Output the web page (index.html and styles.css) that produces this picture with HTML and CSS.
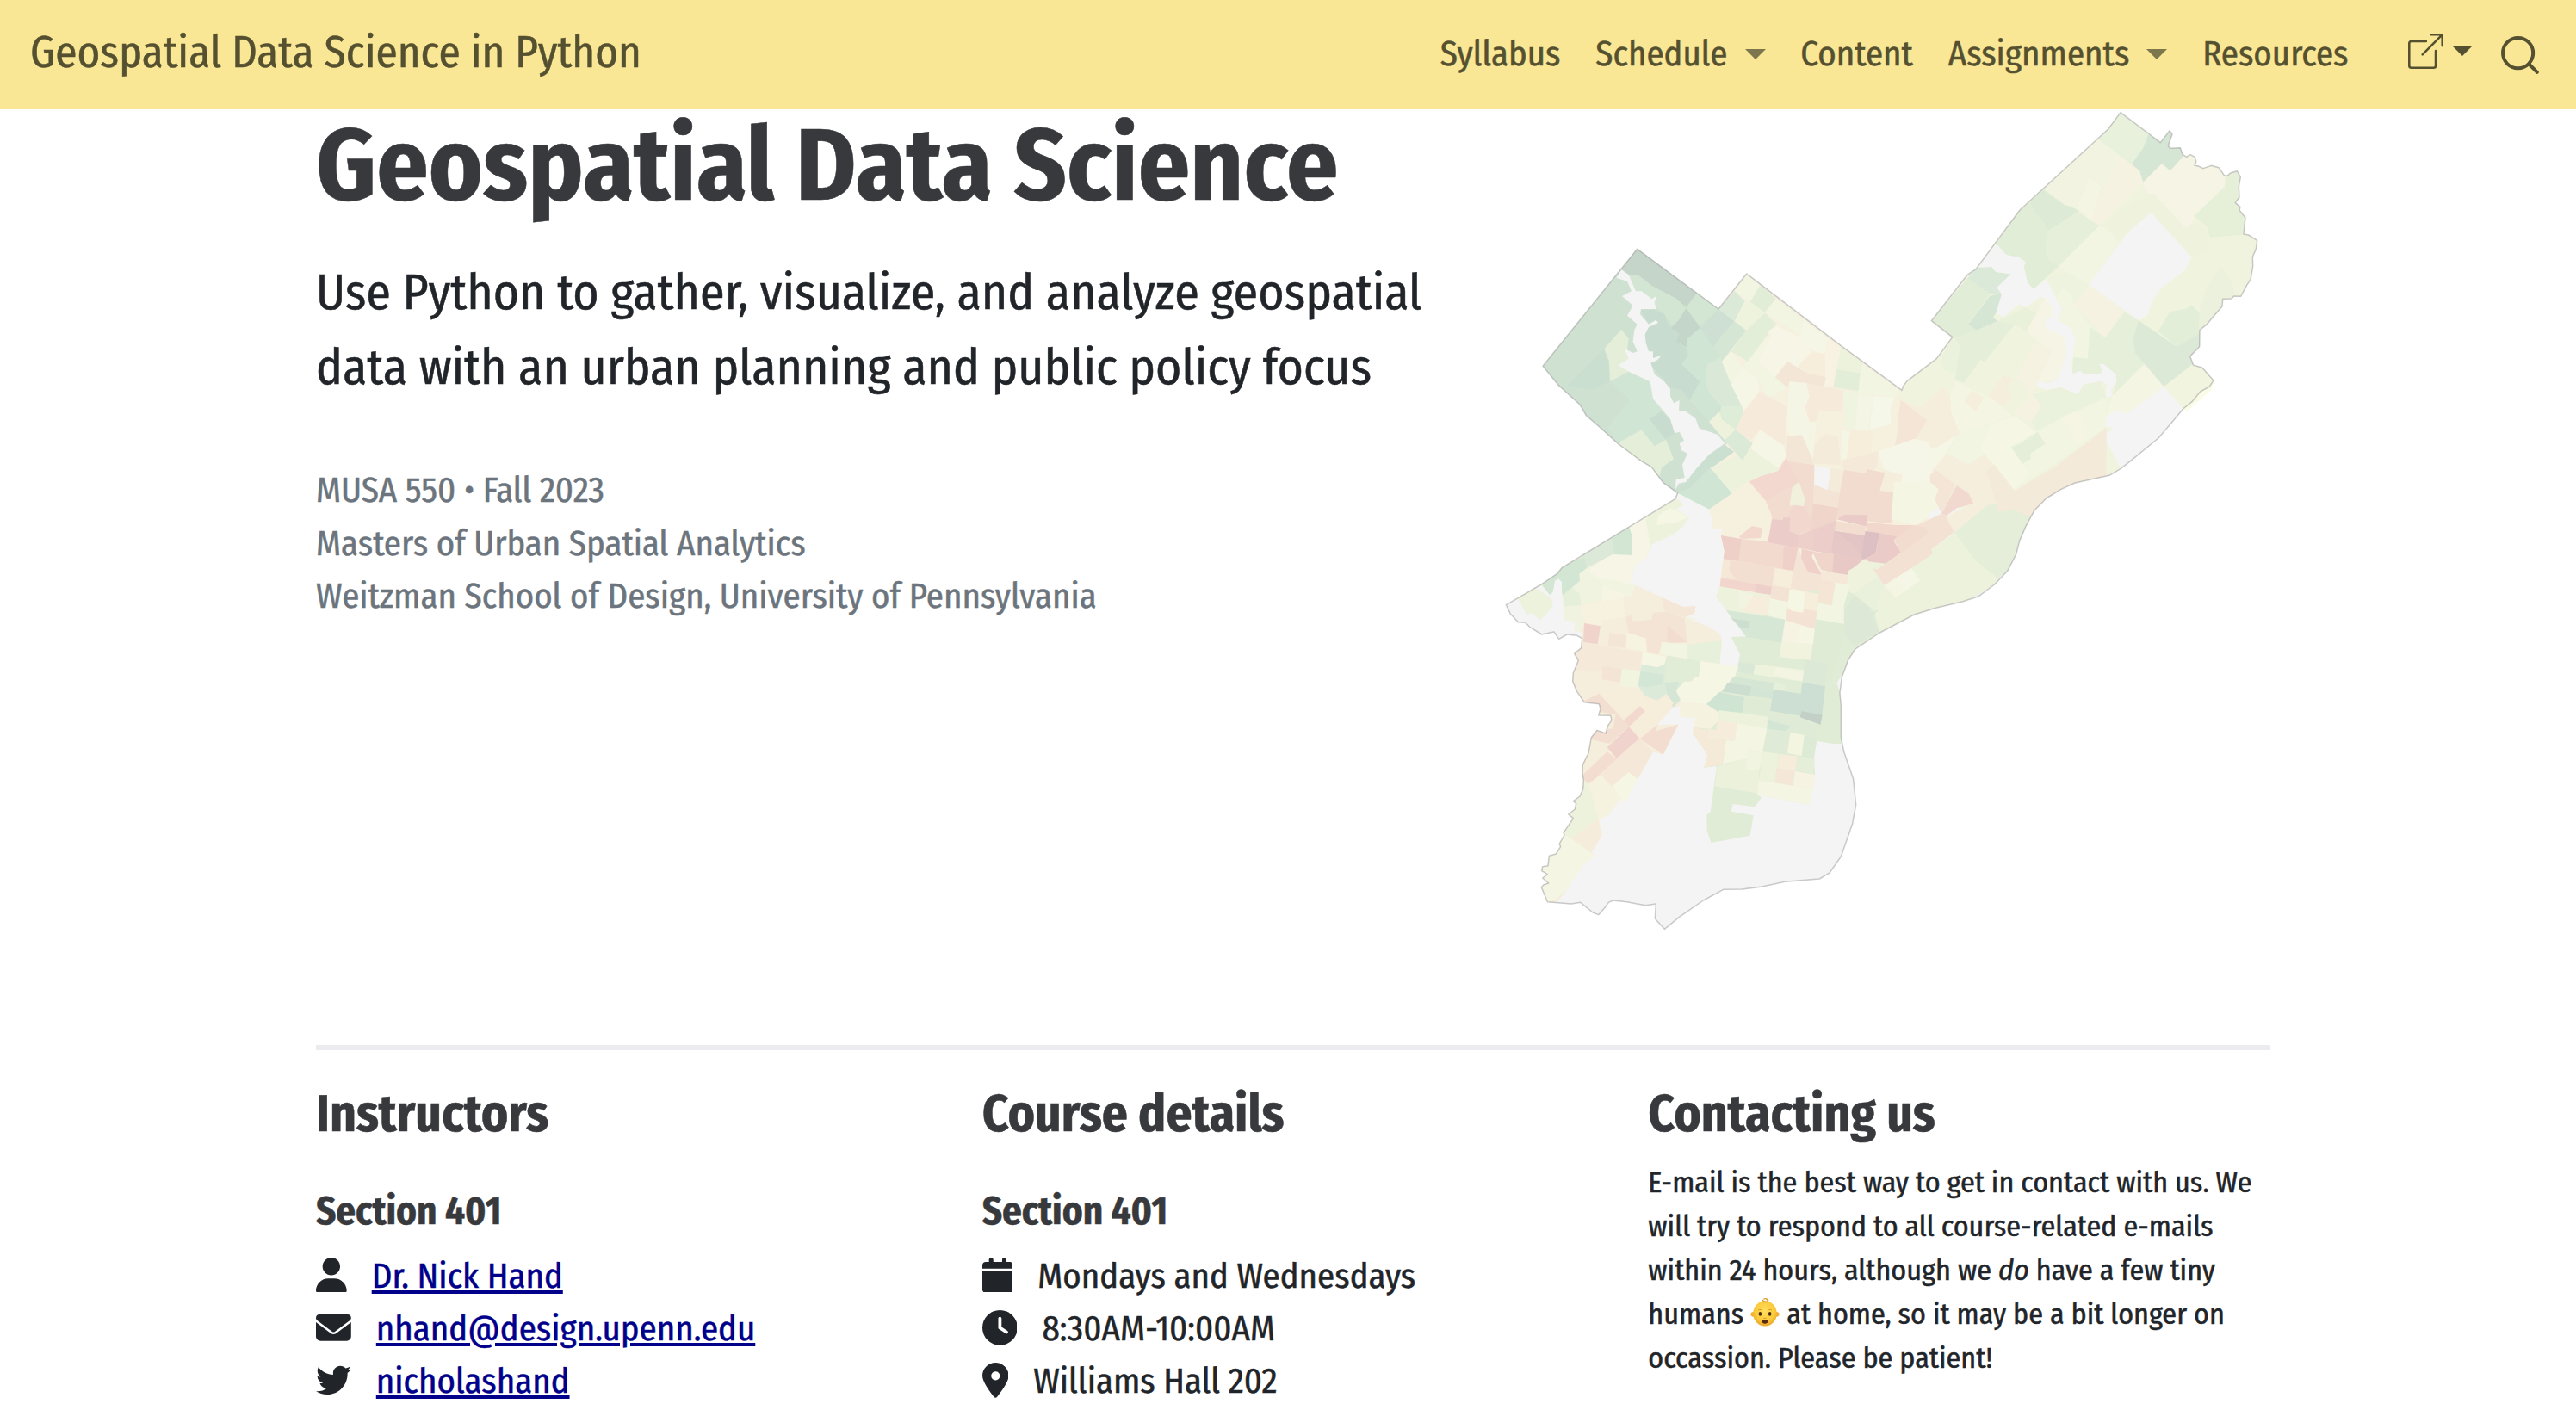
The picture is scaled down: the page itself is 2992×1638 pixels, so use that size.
FILE: index.html
```
<!DOCTYPE html>
<html lang="en">
<head>
<meta charset="utf-8">
<title>Geospatial Data Science in Python</title>
<link rel="stylesheet" href="styles.css">
</head>
<body>
<header class="navbar">
  <a class="brand" href="#">Geospatial Data Science in Python</a>
  <nav class="menu">
    <a href="#">Syllabus</a>
    <a href="#">Schedule<i class="caret"></i></a>
    <a href="#">Content</a>
    <a href="#">Assignments<i class="caret"></i></a>
    <a href="#">Resources</a>
  </nav>
  <div class="tools">
    <svg class="external" viewBox="0 0 16 16" fill="currentColor"><path fill-rule="evenodd" d="M8.636 3.5a.5.5 0 0 0-.5-.5H1.5A1.5 1.5 0 0 0 0 4.5v10A1.5 1.5 0 0 0 1.500 16h10a1.500 1.500 0 0 0 1.500-1.500V7.864a.5.5 0 0 0-1 0V14.500a.5.5 0 0 1-.5.5h-10a.5.5 0 0 1-.5-.5v-10a.5.5 0 0 1 .5-.5h6.636a.5.5 0 0 0 .5-.5z"/><path fill-rule="evenodd" d="M16 .5a.5.5 0 0 0-.5-.5h-5a.5.5 0 0 0 0 1h3.793L6.146 9.146a.5.5 0 1 0 .708.708L15 1.707V5.500a.5.5 0 0 0 1 0v-5z"/></svg>
    <i class="caret solid"></i>
    <svg class="search" viewBox="0 0 44 44" fill="none" stroke="currentColor" stroke-width="4" stroke-linecap="round"><circle cx="19.600" cy="19.600" r="17.600"/><path d="M32.500 32.500l9.300 9.300"/></svg>
  </div>
</header>
<main class="page">
  <section class="hero">
    <div class="intro">
      <h1>Geospatial Data Science</h1>
      <p class="subtitle">Use Python to gather, visualize, and analyze geospatial data with an urban planning and public policy focus</p>
      <p class="meta">MUSA 550 • Fall 2023<br>Masters of Urban Spatial Analytics<br>Weitzman School of Design, University of Pennsylvania</p>
    </div>
    <svg class="map" viewBox="0 51 2691 2919">
      <defs>
        <path id="city" d="M156,946 485,538 768,747 866,624 1195,875 1407,1030 1412,1015 1425,998 1528,920 1583,845 1510,788 1634,629 1665,608 1818,402 2126,120 2169,62 2308,167 2340,125 2349,137 2335,178 2342,187 2377,185 2385,208 2399,217 2412,209 2428,217 2432,234 2427,247 2440,249 2457,257 2485,247 2511,254 2530,281 2542,282 2552,273 2575,266 2587,287 2581,320 2583,357 2569,377 2586,391 2583,403 2604,428 2598,486 2615,489 2645,508 2641,538 2629,565 2630,598 2622,645 2610,662 2588,703 2564,702 2556,711 2525,712 2523,738 2491,775 2470,800 2445,820 2444,878 2411,912 2423,943 2453,951 2493,996 2479,1017 2447,1035 2418,1070 2388,1094 2301,1197 2204,1276 2170,1303 2130,1327 2010,1353 1960,1376 1910,1407 1868,1450 1840,1502 1817,1555 1805,1602 1775,1660 1730,1707 1675,1748 1620,1766 1525,1789 1450,1812 1330,1875 1245,1932 1220,1970 1198,2030 1191,2085 1195,2130 1195,2240 1205,2290 1238,2385 1247,2475 1235,2540 1195,2655 1155,2712 1120,2733 1000,2743 920,2760 850,2769 785,2770 715,2808 630,2867 580,2908 547,2872 550,2820 515,2825 480,2819 450,2813 400,2808 385,2815 375,2830 350,2858 330,2850 287,2815 255,2820 172,2813 151,2762 158,2754 176,2748 155,2730 172,2717 152,2705 155,2690 174,2687 178,2653 202,2646 218,2620 213,2612 231,2580 228,2572 262,2522 245,2508 268,2490 272,2470 262,2462 285,2445 296,2420 298,2390 294,2365 295,2335 315,2295 325,2240 345,2215 375,2226 382,2200 396,2180 392,2164 350,2163 357,2140 352,2123 300,2117 275,2080 260,2045 262,2015 280,1972 266,1948 290,1928 293,1895 275,1885 240,1881 212,1897 195,1872 152,1881 110,1855 95,1840 70,1838 42,1808 28,1778 150,1707 205,1670 222,1649 455,1507 617,1409 626,1388 575,1352 535,1298 498,1276 420,1218 350,1155 307,1118 285,1080 210,1012Z"/>
        <clipPath id="land"><use href="#city"/></clipPath>
      </defs>
      <path fill="#fbfce6" d="M2388,1094 2420,1068 2450,1036 2480,1018 2495,1000 2485,1030 2400,1104Z"/>
      <use href="#city" fill="#f4f4f4"/>
      <g clip-path="url(#land)">
        <!-- Northeast -->
        <g transform="translate(1320 0)">
          <path fill="#f0f4df" d="M88,1030 0,960 190,788 498,402 849,50 1030,100 1330,200 1340,700 1170,1010 860,1300 500,1500 150,1400 0,1300Z"/>
          <path fill="#e8f1db" d="M772,155 849,62 945,140 928,185 887,243Z"/>
          <path fill="#f6f4e4" d="M927,305 993,240 1022,265 1080,190 1215,240 1212,320 1078,468 965,345 943,345Z"/>
          <path fill="#d5e6d4" d="M945,140 988,160 1020,120 1065,185 1070,212 1022,265 993,240 927,305 915,265 887,243 928,185Z"/>
          <path fill="#f6f2e1" d="M843,215 887,243 915,265 927,305 775,455 740,435Z"/>
          <path fill="#f2f4e1" d="M582,330 772,155 843,215 790,310 740,290 700,395 655,385Z"/>
          <path fill="#f5f5e4" d="M740,290 782,320 745,440 697,395Z"/>
          <path fill="#e6f0d9" d="M1215,280 1280,250 1290,300 1300,440 1278,488 1160,497 1150,460 1105,423 1212,320Z"/>
          <path fill="#dcead6" d="M533,375 580,330 655,385 675,390 705,405 592,478 585,450 550,410Z"/>
          <path fill="#e1edd6" d="M415,518 498,402 533,375 550,410 585,450 592,478 588,550 635,597 545,678 525,655 512,600 518,580 450,558Z"/>
          <path fill="#e6efda" d="M592,478 703,408 775,457 635,597 602,580 588,550Z"/>
          <path fill="#f3f5e3" d="M635,597 775,457 800,465 840,512 740,662 665,620Z"/>
          <path fill="#eff3de" d="M775,455 943,345 965,345 1078,468 1105,440 1150,470 1160,550 1097,568 955,410 870,485 840,512 800,465Z"/>
          <path fill="#f4f4f4" d="M955,410 1097,568 1070,615 990,675 960,720 945,765 912,787 738,662 870,485Z"/>
          <path fill="#dae9d8" d="M315,640 345,608 370,598 400,600 415,618 467,625 418,672 435,695 430,700 395,695Z"/>
          <path fill="#e1edd6" d="M190,788 315,640 395,695 320,795 350,820 270,850Z"/>
          <path fill="#d6e6d5" d="M395,700 435,695 415,762 405,775 420,790 348,822 318,800Z"/>
          <path fill="#e4eed9" d="M270,850 350,820 420,790 480,800 375,932 290,875Z"/>
          <path fill="#eaf1dc" d="M220,925 263,845 290,875 275,970 235,960Z"/>
          <path fill="#e4eed9" d="M290,875 362,922 303,1005 272,990Z"/>
          <path fill="#e9f1db" d="M420,790 520,740 560,765 520,825 480,800Z"/>
          <path fill="#f6f5e5" d="M520,825 590,705 630,740 655,850 660,900 635,985 557,1010 550,900 610,895Z"/>
          <path fill="#f6f2e1" d="M555,860 612,895 540,1045 483,985Z"/>
          <path fill="#f6f2e1" d="M480,1110 540,1045 575,1080 540,1145Z"/>
          <path fill="#f6eedd" d="M388,1050 440,978 475,990 455,1030 470,1060 440,1088Z"/>
          <path fill="#edf3de" d="M590,640 665,620 738,662 688,730 645,675 625,700Z"/>
          <path fill="#f2f5e2" d="M625,700 645,675 672,690 690,735 742,810 735,920 680,915 690,830 632,785 648,745Z"/>
          <path fill="#e5efd9" d="M742,810 795,847 862,757 912,787 1000,1018 935,940 820,1050 835,1000 785,935 780,975 715,970 680,975 685,915 735,920Z"/>
          <path fill="#f4f4f4" d="M355,600 415,518 450,558 495,566 518,585 512,600 525,655 545,678 590,643 608,680 645,745 630,785 675,812 692,850 678,945 682,972 710,962 720,975 780,975 785,960 775,940 790,938 833,975 835,1000 815,1028 820,1050 797,1055 800,1010 780,998 720,1010 700,1045 640,1020 595,1028 557,1018 560,1000 600,1005 635,985 660,900 655,850 630,830 588,815 588,778 610,780 615,745 590,710 570,705 520,740 497,730 440,775 415,762 435,695 418,672 467,625 415,618 400,600 370,602Z"/>
          <path fill="#f6f2e1" d="M738,662 862,757 795,847 688,730Z"/>
          <path fill="#dce9d6" d="M912,787 1045,878 1122,820 1140,880 1091,912 1103,943 1050,990 1000,1018 935,940 900,900 893,850Z"/>
          <path fill="#e3eed8" d="M1020,757 1080,745 1095,732 1125,760 1122,835 1045,878 980,825Z"/>
          <path fill="#ebf1dc" d="M1200,600 1235,645 1250,710 1210,740 1122,820 1125,750 1150,670Z"/>
          <path fill="#f5f5e4" d="M820,1050 930,940 1000,1018 870,1112 838,1098 800,1122Z"/>
          <path fill="#f1f5e0" d="M1000,1018 1095,943 1140,940 1180,996 1068,1094Z"/>
          <path fill="#f4f4f4" d="M1000,1018 1068,1094 981,1197 855,1310 790,1190 825,1162 797,1158 797,1122 838,1098 870,1112Z"/>
          <path fill="#eaf1dc" d="M540,1045 640,1020 700,1045 720,1010 780,998 800,1055 650,1120 555,1175 540,1140 575,1080Z"/>
          <path fill="#f1f5e1" d="M555,1175 800,1055 797,1160 700,1230 475,1380 410,1285 380,1200Z"/>
          <path fill="#f6f5e4" d="M645,1127 700,1100 740,1175 700,1225Z"/>
          <path fill="#f5f6e4" d="M400,1145 480,1120 555,1175 465,1225 530,1320 475,1380 360,1235Z"/>
          <path fill="#e4eed8" d="M468,1228 500,1215 560,1175 587,1217 535,1250 537,1268 507,1287Z"/>
          <path fill="#f6eedc" d="M88,1065 150,1090 230,1018 255,1050 260,1110 290,1180 200,1235 135,1200 175,1135Z"/>
          <path fill="#f5e5d7" d="M75,1030 85,1065 175,1135 135,1200 62,1225 75,1160 47,1098Z"/>
          <path fill="#f5f5e4" d="M255,1050 275,1000 400,1060 470,1120 290,1180 260,1110Z"/>
          <path fill="#f6eedc" d="M305,1070 330,1030 372,1055 345,1105Z"/>
          <path fill="#f6f6e7" d="M62,1225 135,1200 200,1235 280,1185 210,1300 190,1440 0,1440 0,1240Z"/>
          <path fill="#f1f5e1" d="M245,1250 290,1180 400,1145 360,1235 380,1250 315,1290Z"/>
          <path fill="#f6eedd" d="M190,1310 245,1250 315,1290 380,1250 415,1440 335,1415 280,1360Z"/>
        </g>
        <!-- Northwest and center -->
        <g transform="translate(0 450)">
          <path fill="#cfe2d2" d="M140,496 485,70 768,297 790,480 865,665 740,995 620,945 400,800Z"/>
          <path fill="#f6f0df" d="M768,297 866,174 1407,580 1380,780 1500,760 1500,1380 780,1380 735,995 818,942 739,850 865,665 780,480Z"/>
          <path fill="#c5d5ca" d="M485,80 692,243 655,292 620,260 535,215 490,180 455,178 430,160Z"/>
          <path fill="#d3e6d3" d="M455,178 490,180 535,215 620,260 655,292 642,330 605,355 580,315 550,290 480,235Z"/>
          <path fill="#d3e5d3" d="M692,243 768,297 735,330 705,362 675,320 655,292Z"/>
          <path fill="#cde0d3" d="M768,297 824,340 748,430 705,362Z"/>
          <path fill="#d5e6d5" d="M824,340 865,372 780,480 748,430Z"/>
          <path fill="#c8dccf" d="M495,300 545,300 580,315 590,345 603,362 632,385 622,410 655,435 660,470 640,490 703,550 668,615 640,580 600,570 530,490 510,400 525,350Z"/>
          <path fill="#c4d5ca" d="M630,335 655,295 705,362 672,395 655,430 622,410 632,385 603,362Z"/>
          <path fill="#d0e5d3" d="M660,400 705,362 748,430 775,465 735,490 722,545 735,590 778,635 735,690 668,615 703,550 640,490 662,460Z"/>
          <path fill="#dae9d7" d="M775,465 780,480 830,600 865,665 828,717 770,670 778,635 735,590 722,545 730,490Z"/>
          <path fill="#deedd8" d="M778,635 845,635 865,665 828,717 770,670Z"/>
          <path fill="#cbdfd1" d="M370,435 387,500 390,550 320,580 240,565Z"/>
          <path fill="#d1e5d4" d="M390,550 455,515 530,550 540,610 600,680 615,730 545,775 500,718 420,768 380,710 460,615Z"/>
          <path fill="#e4eed8" d="M370,435 430,368 455,400 450,440 465,470 440,495 455,515 390,550 387,480Z"/>
          <path fill="#e4eed8" d="M410,768 500,718 545,775 585,752 612,820 570,850 560,890 490,840Z"/>
          <path fill="#c8dccf" d="M527,680 570,652 605,690 615,730 583,750Z"/>
          <path fill="#f4f4f4" d="M430,160 455,178 480,235 500,235 535,262 552,252 545,275 552,297 498,297 495,315 525,350 550,335 558,345 525,360 512,385 515,415 525,445 540,445 540,468 570,458 555,475 532,485 545,525 575,545 600,575 600,600 612,625 632,615 630,650 655,655 688,678 700,712 765,735 790,765 735,805 690,855 655,900 630,905 618,925 620,890 650,885 642,840 660,800 640,790 632,765 648,755 632,725 615,730 600,680 540,610 530,550 455,515 418,493 455,470 440,435 470,450 485,445 470,410 475,370 485,350 450,320 470,285 432,252 465,235 450,200 412,188Z"/>
          <path fill="#cce0d1" d="M735,805 790,770 822,795 745,850 665,925 620,930 655,900 690,855Z"/>
          <path fill="#d0e5d3" d="M739,850 818,942 735,995 620,940 665,925Z"/>
          <path fill="#ecf2dc" d="M739,850 885,787 975,850 975,862 880,890 818,942Z"/>
          <path fill="#dbe9d7" d="M790,757 828,717 887,765 852,825Z"/>
          <path fill="#eef2dc" d="M735,690 770,655 780,680 828,717 790,755Z"/>
          <path fill="#dbe9d8" d="M768,297 825,235 860,270 824,340Z"/>
          <path fill="#f1f5e2" d="M825,235 866,174 915,212 878,272Z"/>
          <path fill="#e2edd7" d="M915,212 968,262 930,310 878,272Z"/>
          <path fill="#edf3dd" d="M860,270 878,272 930,310 865,370 824,340Z"/>
          <path fill="#f1f5e2" d="M968,262 1065,335 1055,390 930,310Z"/>
          <path fill="#e3eed8" d="M865,372 930,310 970,350 940,385 870,480 812,445Z"/>
          <path fill="#f2f5e2" d="M780,480 812,445 850,500 812,560Z"/>
          <path fill="#f6f6e6" d="M850,500 905,540 910,585 858,655 812,560Z"/>
          <path fill="#f1f5e2" d="M870,480 940,390 1005,480 965,535 1010,570 940,610 905,540 850,500Z"/>
          <path fill="#f7f5e6" d="M950,390 940,375 970,355 1060,400 1090,450 1045,500 1005,480 965,535 905,480Z"/>
          <path fill="#f6f6e6" d="M1065,335 1150,400 1138,455 1060,430 1055,390Z"/>
          <path fill="#f7f2e1" d="M1150,400 1195,430 1168,570 1138,570 1140,455Z"/>
          <path fill="#ecf2dc" d="M1195,430 1270,485 1262,520 1180,508Z"/>
          <path fill="#e2eed7" d="M1180,508 1262,520 1255,583 1168,570Z"/>
          <path fill="#f1f5e2" d="M1270,485 1300,510 1400,580 1380,605 1255,590Z"/>
          <path fill="#f6eddb" d="M1045,495 1090,450 1140,452 1140,535 1075,520Z"/>
          <path fill="#f6ebdb" d="M858,650 912,585 1015,640 1005,700 1000,775 912,717 880,755 828,717Z"/>
          <path fill="#f4e6d7" d="M965,535 1010,480 1075,520 1142,535 1135,575 1015,550 1010,572Z"/>
          <path fill="#f5f5e5" d="M1015,550 1075,555 1085,600 1070,640 1085,690 1060,735 1015,740 1005,700Z"/>
          <path fill="#f6ebdb" d="M1075,555 1205,580 1200,655 1120,650 1110,690 1085,690 1070,640 1085,600Z"/>
          <path fill="#eff4e0" d="M1205,580 1255,590 1245,715 1205,712Z"/>
          <path fill="#f4f5e4" d="M1255,590 1310,600 1290,720 1245,715Z"/>
          <path fill="#f5f7e9" d="M1310,600 1380,605 1366,650 1370,700 1295,715Z"/>
          <path fill="#f5f5e5" d="M1060,735 1085,690 1110,690 1095,820Z"/>
          <path fill="#f4e6d7" d="M1008,742 1058,735 1095,820 1102,840 1003,825Z"/>
          <path fill="#f5ebda" d="M1105,765 1140,733 1185,740 1195,840 1095,835Z"/>
          <path fill="#f5f5e5" d="M1200,720 1228,722 1215,815 1195,825Z"/>
          <path fill="#f6eddb" d="M1228,720 1305,725 1300,800 1215,815Z"/>
          <path fill="#f5e9d9" d="M1195,825 1325,793 1320,850 1285,870 1205,860Z"/>
          <path fill="#f6f6e6" d="M887,765 912,717 995,775 1003,810 975,850 885,787Z"/>
          <path fill="#f6f1df" d="M735,995 875,898 955,1020 920,1060 885,1053 840,1090 745,1065Z"/>
          <path fill="#f2dccf" d="M1003,825 1102,840 1098,1080 1050,1085 940,1110 955,1020 932,965 1045,900Z"/>
          <path fill="#f3d8cf" d="M975,862 1003,815 1050,900 932,965 875,898 915,880Z"/>
          <path fill="#f1f0dc" d="M1048,898 1070,960 1065,985 1015,982 1025,920Z"/>
          <path fill="#f5ebda" d="M1158,852 1205,858 1190,940 1148,925Z"/>
          <path fill="#f4e4d6" d="M1102,905 1148,925 1192,940 1185,990 1098,975Z"/>
          <path fill="#f4f4f4" d="M1104,842 1158,852 1148,928 1102,908Z"/>
          <path fill="#f6f6e8" d="M1350,870 1325,793 1450,750 1500,760 1500,1020 1450,1050 1372,1030 1385,937 1330,930Z"/>
          <path fill="#f6eedd" d="M1320,850 1410,875 1400,920 1385,937 1330,930 1348,868Z"/>
          <path fill="#f2dcd0" d="M1205,858 1283,870 1285,855 1348,868 1330,930 1385,937 1370,1045 1180,1025 1190,940Z"/>
          <path fill="#f0d5cb" d="M1098,975 1185,990 1180,1030 1090,1070Z"/>
          <path fill="#f1d7cd" d="M1030,980 1068,985 1098,1060 1045,1080 1015,1070 1010,1020Z"/>
          <path fill="#f2dacf" d="M945,1108 1045,1130 1030,1210 835,1175 845,1098Z"/>
          <path fill="#ebccc8" d="M955,1030 992,1033 995,1023 1018,1025 1015,1070 1050,1085 1045,1130 940,1110Z"/>
          <path fill="#eed0ca" d="M1050,1085 1180,1030 1175,1070 1160,1150 1045,1130Z"/>
          <path fill="#eccdc9" d="M1100,1070 1170,1040 1160,1150 1097,1140Z"/>
          <path fill="#e6c8c6" d="M1170,1070 1280,1085 1275,1170 1160,1150Z"/>
          <path fill="#e3c5c5" d="M1170,1070 1280,1085 1265,1155 1240,1120Z"/>
          <path fill="#eacbc8" d="M1180,1030 1210,1013 1288,1015 1283,1055Z"/>
          <path fill="#f2ddd0" d="M1178,1035 1283,1055 1278,1087 1174,1068Z"/>
          <path fill="#f1d7cc" d="M1288,1040 1385,1050 1450,1050 1378,1105 1390,1090 1285,1070Z"/>
          <path fill="#edf2dc" d="M1225,1225 1228,1210 1278,1173 1345,1255 1500,1150 1500,1380 1180,1380Z"/>
          <path fill="#f4e3d4" d="M1278,1173 1325,1202 1405,1145 1500,1080 1500,1160 1345,1258Z"/>
          <path fill="#dcc0c4" d="M1280,1070 1330,1078 1315,1150 1275,1170 1265,1160Z"/>
          <path fill="#eacbc8" d="M1330,1078 1390,1090 1378,1105 1405,1145 1325,1202 1280,1168 1315,1150Z"/>
          <path fill="#e9c9c6" d="M1165,1150 1275,1168 1228,1210 1225,1225 1160,1215Z"/>
          <path fill="#f0d5cb" d="M1095,1142 1170,1152 1165,1215 1125,1205Z"/>
          <path fill="#efd1ca" d="M995,1125 1045,1130 1030,1210 992,1203Z"/>
          <path fill="#eed0c9" d="M776,1086 848,1098 838,1175 785,1168 788,1140Z"/>
          <path fill="#f3d8ce" d="M840,1090 885,1053 920,1060 915,1095 848,1098Z"/>
          <path fill="#f3dfd1" d="M785,1170 835,1175 1030,1210 1020,1275 770,1235Z"/>
          <path fill="#f5e8d7" d="M783,1170 810,1173 805,1205 828,1240 770,1235Z"/>
          <path fill="#f6edda" d="M965,1200 1028,1210 1020,1272 955,1262Z"/>
          <path fill="#f2d6cd" d="M770,1233 955,1265 950,1293 768,1263Z"/>
          <path fill="#eed0ca" d="M900,1255 955,1265 950,1293 895,1285Z"/>
          <path fill="#f4e4d5" d="M1030,1210 1045,1132 1060,1165 1080,1215 1175,1230 1165,1300 1020,1270Z"/>
          <path fill="#efd1ca" d="M1058,1133 1100,1142 1093,1160 1128,1223 1080,1215 1056,1165Z"/>
          <path fill="#f5e8d8" d="M1125,1210 1225,1228 1220,1258 1125,1240Z"/>
          <path fill="#f4f4f4" d="M626,938 735,995 745,1030 745,1065 780,1062 776,1086 788,1140 768,1300 790,1340 815,1380 600,1380 480,1300 460,1250 475,1195 545,1105 610,1080 640,1050 665,1020 600,995Z"/>
          <path fill="#f1f4e0" d="M28,1328 222,1190 455,1050 617,959 650,978 620,995 668,1020 640,1060 545,1105 515,1165 475,1195 460,1255 480,1260 640,1335 688,1335 660,1370 700,1380 230,1380 220,1250 200,1240 190,1300 135,1268Z"/>
          <path fill="#ecf2dc" d="M513,1020 617,950 645,980 620,995 668,1020 640,1060 615,1080 530,1120Z"/>
          <path fill="#f5f6e3" d="M560,1015 600,990 668,1020 625,1040 552,1050Z"/>
          <path fill="#f7f6e6" d="M455,1050 513,1025 530,1120 515,1165 470,1200 460,1258 400,1240 360,1240 310,1210 400,1150 468,1155Z"/>
          <path fill="#d3e6d4" d="M400,1092 455,1052 468,1090 468,1155 403,1152Z"/>
          <path fill="#dde9d8" d="M290,1155 400,1088 403,1150 305,1202Z"/>
          <path fill="#d3e6d3" d="M150,1255 222,1190 300,1160 308,1200 283,1220 285,1245 225,1295 215,1250 200,1245 190,1285 180,1294Z"/>
          <path fill="#f4f4f4" d="M20,1340 68,1308 100,1362 120,1355 148,1380 30,1380Z"/>
          <path fill="#ecf2dc" d="M68,1306 130,1266 188,1300 192,1335 148,1382 118,1355 100,1362Z"/>
          <path fill="#f4f4f4" d="M148,1380 192,1335 185,1305 130,1268 148,1260 180,1294 192,1285 198,1245 210,1237 222,1248 222,1300 235,1385Z"/>
          <path fill="#e6efd9" d="M225,1295 265,1265 285,1280 290,1330 233,1335Z"/>
        </g>
        <!-- Riverfront -->
        <g transform="translate(600 1110)">
          <path fill="#edf2dc" d="M678,515 835,535 905,480 1000,410 1160,320 1270,340 1140,590 900,740 730,780 705,715 745,600Z"/>
          <path fill="#e4eed9" d="M990,415 1105,320 1140,315 1145,345 1195,335 1270,360 1220,520 1142,575 1065,515Z"/>
          <path fill="#f4f5e2" d="M745,600 835,535 870,583 785,645Z"/>
          <path fill="#f6f6e6" d="M785,570 835,535 870,583 810,620Z"/>
          <path fill="#eff3dd" d="M620,550 678,515 720,570 635,632 615,610Z"/>
          <path fill="#e9f1dc" d="M635,632 720,570 745,600 705,715 690,690 700,680Z"/>
          <path fill="#f3e2d4" d="M705,540 720,545 805,488 780,440 850,395 945,350 985,370 990,415 910,475 915,490 840,540 745,600Z"/>
          <path fill="#f2dcd0" d="M780,440 850,390 890,398 897,420 805,488Z"/>
          <path fill="#f6eedc" d="M990,415 960,360 1055,315 1050,290 920,195 960,150 1050,180 1090,145 1130,180 1105,200 1135,315 1105,320Z"/>
          <path fill="#f5f5e3" d="M780,240 900,238 935,265 922,300 942,322 850,388 770,370Z"/>
          <path fill="#f4e5d6" d="M905,215 925,198 995,250 945,350 922,300 935,265 905,240Z"/>
          <path fill="#f2d9cf" d="M998,252 1040,280 1057,315 1000,330 962,358 945,350Z"/>
          <path fill="#f4ead9" d="M1100,200 1130,180 1200,270 1350,180 1520,50 1520,225 1270,370 1195,335 1145,345Z"/>
        </g>
        <!-- West, Southwest and South -->
        <g transform="translate(0 1650)">
          <path fill="#e1ecd6" d="M795,145 865,238 812,240 843,300 835,340 820,390 727,473 690,520 680,575 730,650 718,695 762,690 740,850 727,860 728,915 742,957 780,950 878,932 890,862 812,848 818,822 895,832 918,800 905,790 1085,825 1105,720 1100,665 1110,602 1165,612 1260,612 1180,400 1240,310 1330,225 1310,150 1240,90 1175,60 1000,100 770,80 760,100Z"/>
          <path fill="#f6eedc" d="M233,135 290,130 360,110 440,95 462,100 480,60 645,135 688,132 685,155 650,172 735,205 775,230 780,260 772,335 838,342 820,390 770,435 730,475 690,520 640,515 632,480 610,485 555,545 628,545 575,650 540,640 487,735 440,822 430,800 385,860 350,875 362,930 325,990 338,1003 300,1030 260,1090 230,1135 200,1170 100,1165 100,1000 200,850 250,300 295,260 293,222 265,218 268,185 233,182Z"/>
          <path fill="#f0f3df" d="M233,135 290,130 300,190 290,220 265,218 268,185 233,182Z"/>
          <path fill="#f0f3df" d="M262,70 300,30 365,50 362,110 290,130 285,90Z"/>
          <path fill="#f6f5e4" d="M362,60 440,90 435,110 362,115Z"/>
          <path fill="#f7f1e0" d="M290,128 362,115 435,105 445,170 360,182 357,200 298,190Z"/>
          <path fill="#f0d4cb" d="M300,192 357,202 347,265 297,258Z"/>
          <path fill="#f4e4d6" d="M445,170 465,165 470,185 535,180 540,155 590,152 650,175 658,258 570,258 560,300 520,295 515,245 455,225Z"/>
          <path fill="#f5e7d8" d="M570,103 645,135 688,132 685,158 650,172 580,150Z"/>
          <path fill="#f3ddd1" d="M590,200 658,258 590,262Z"/>
          <path fill="#f5e9d9" d="M255,300 297,258 345,268 500,295 495,358 255,355Z"/>
          <path fill="#f4e6d7" d="M388,225 447,235 445,278 382,272Z"/>
          <path fill="#f7f3e1" d="M450,225 515,245 518,290 447,280Z"/>
          <path fill="#f4e4d6" d="M363,340 432,352 425,398 362,388Z"/>
          <path fill="#f1f5e0" d="M432,350 495,358 490,415 425,412Z"/>
          <path fill="#f1f5e1" d="M570,258 660,265 660,318 565,300Z"/>
          <path fill="#e6f0da" d="M660,267 778,252 772,333 662,318Z"/>
          <path fill="#dceada" d="M500,335 555,345 582,330 590,305 705,325 700,380 680,385 650,405 625,420 580,450 550,462 515,450 488,410Z"/>
          <path fill="#f6f6e5" d="M505,293 585,308 580,335 555,345 500,335Z"/>
          <path fill="#d4e6d5" d="M497,360 578,372 572,405 520,415 488,410Z"/>
          <path fill="#e2edd7" d="M590,305 705,325 700,380 640,400 578,395Z"/>
          <path fill="#d5e6d6" d="M580,400 630,395 622,430 635,460 610,485 590,440Z"/>
          <path fill="#f5f6e4" d="M705,325 838,342 820,390 770,435 725,475 640,465 620,425 650,395 680,395 682,380 700,378Z"/>
          <path fill="#f6f2e0" d="M635,465 725,475 770,500 765,535 738,560 680,555 690,520 665,522 632,515Z"/>
          <path fill="#f6edda" d="M350,437 460,415 510,445 555,462 585,438 612,470 555,545 495,595 456,552Z"/>
          <path fill="#f3dfd2" d="M290,467 352,437 410,500 456,552 388,612 315,595 340,560 400,560 410,510 350,500Z"/>
          <path fill="#f2d8ce" d="M438,530 495,480 512,500 456,553Z"/>
          <path fill="#f3ddd1" d="M495,595 555,545 550,568 628,545 575,650Z"/>
          <path fill="#f5e8d8" d="M413,663 493,593 540,640 487,735 455,712 398,760 358,720Z"/>
          <path fill="#f3ddd0" d="M290,725 380,640 413,665 315,755Z"/>
          <path fill="#f0d3cc" d="M456,553 493,593 413,663 380,625Z"/>
          <path fill="#f5f6e4" d="M398,760 455,712 487,735 440,822Z"/>
          <path fill="#edf2dc" d="M290,740 315,752 350,870 260,940 200,925Z"/>
          <path fill="#f6f2e0" d="M315,752 358,720 430,800 385,860 350,875Z"/>
          <path fill="#f4f5e3" d="M235,930 338,1003 300,1030 240,1120 200,1155 140,1170 100,1100Z"/>
          <path fill="#f6ecdb" d="M260,940 350,875 362,930 325,990Z"/>
          <path fill="#edf2dc" d="M770,65 950,95 935,165 795,147 762,100Z"/>
          <path fill="#f2f4e1" d="M840,80 890,90 885,135 840,140Z"/>
          <path fill="#f6eddc" d="M890,95 950,100 938,163 855,150Z"/>
          <path fill="#f1f5e2" d="M950,95 1018,112 1003,180 938,165Z"/>
          <path fill="#f3e3d5" d="M955,60 1018,70 1010,118 948,105Z"/>
          <path fill="#f6eedb" d="M1070,82 1118,90 1110,150 1065,145Z"/>
          <path fill="#f4e5d5" d="M1118,60 1175,55 1163,130 1115,122Z"/>
          <path fill="#f2f5e2" d="M1175,55 1225,60 1205,130 1205,195 1108,178 1115,122 1163,130Z"/>
          <path fill="#dde9d6" d="M1240,93 1300,140 1290,160 1325,145 1305,170 1328,220 1240,270 1205,230 1207,150Z"/>
          <path fill="#d6e7d6" d="M795,147 1000,180 990,260 865,240Z"/>
          <path fill="#cbded0" d="M812,175 878,185 875,210 845,208Z"/>
          <path fill="#f1f3df" d="M1000,180 1103,210 1090,320 980,310Z"/>
          <path fill="#f7f3e2" d="M1003,182 1055,195 1045,262 990,255Z"/>
          <path fill="#f5f6e4" d="M1055,195 1103,210 1098,265 1045,260Z"/>
          <path fill="#f4e3d4" d="M1008,135 1110,150 1103,212 1002,182Z"/>
          <path fill="#f6f6e5" d="M1015,75 1070,85 1063,155 1026,150 1010,140Z"/>
          <path fill="#dfebd5" d="M1090,325 1110,180 1205,195 1210,240 1150,400 1140,330Z"/>
          <path fill="#eef3dd" d="M895,335 1068,355 1063,395 890,370Z"/>
          <path fill="#f3f5e2" d="M970,345 1068,362 1063,395 958,372Z"/>
          <path fill="#d9e8d7" d="M840,328 895,335 890,370 835,362Z"/>
          <path fill="#dce9d7" d="M1070,320 1150,330 1140,412 1060,400Z"/>
          <path fill="#d5e6d5" d="M820,378 960,400 955,430 800,405Z"/>
          <path fill="#cbdecf" d="M800,400 882,412 878,445 780,430Z"/>
          <path fill="#d3e5d4" d="M882,416 960,428 955,455 875,445Z"/>
          <path fill="#e6efd9" d="M960,398 1000,408 1000,428 960,420Z"/>
          <path fill="#d0e4d3" d="M770,432 858,450 853,503 765,500 727,473Z"/>
          <path fill="#dfebd5" d="M858,450 950,462 945,510 853,500Z"/>
          <path fill="#ccdfd2" d="M960,422 1055,438 1060,398 1140,412 1125,545 1055,515 948,497Z"/>
          <path fill="#c3d0c8" d="M1058,498 1130,512 1123,545 1052,520Z"/>
          <path fill="#ecf2dc" d="M770,495 942,518 938,560 765,535Z"/>
          <path fill="#dfebd6" d="M942,505 1052,520 1110,555 1105,602 1060,660 925,640Z"/>
          <path fill="#d3e6d6" d="M942,530 1018,550 1005,568 938,560Z"/>
          <path fill="#f5e9d8" d="M680,555 735,565 735,590 795,600 780,685 718,695 730,650 678,575Z"/>
          <path fill="#f6ecdb" d="M765,530 832,540 825,603 730,590 735,560 760,565Z"/>
          <path fill="#f5f5e3" d="M832,540 937,560 920,645 885,635 865,665 783,682 795,600 825,603Z"/>
          <path fill="#ebf1db" d="M765,690 865,663 862,705 910,698 905,785 755,760Z"/>
          <path fill="#f1f4e0" d="M870,630 925,640 912,700 885,708 862,700Z"/>
          <path fill="#f3f5e1" d="M1018,572 1068,582 1058,655 1008,645Z"/>
          <path fill="#dcead6" d="M1068,580 1110,602 1100,665 1058,655Z"/>
          <path fill="#ecf2dc" d="M925,640 978,648 965,748 908,742Z"/>
          <path fill="#f6ecda" d="M980,647 1043,655 1035,710 972,698Z"/>
          <path fill="#e4eed8" d="M1043,655 1103,665 1098,715 1037,705Z"/>
          <path fill="#f4e7d7" d="M970,697 1035,708 1025,760 963,748Z"/>
          <path fill="#f7f3e2" d="M1035,708 1106,720 1098,770 1028,758Z"/>
          <path fill="#f4f5e2" d="M908,740 963,748 1098,770 1085,825 903,790Z"/>
        </g>
      </g>
      <use href="#city" fill="none" stroke="#999" stroke-opacity=".5" stroke-width="4.500" stroke-linejoin="round"/>
    </svg>
  </section>
  <hr>
  <section class="columns">
    <div>
      <h3>Instructors</h3>
      <h4>Section 401</h4>
      <ul class="facts">
        <li><svg style="width:35.7px" viewBox="0 0 448 512"><path d="M224 256c70.700 0 128-57.300 128-128S294.700 0 224 0 96 57.300 96 128s57.300 128 128 128zm-45.700 48C79.800 304 0 383.800 0 482.300 0 498.700 13.300 512 29.700 512H418.300c16.400 0 29.700-13.300 29.700-29.700C448 383.800 368.200 304 269.700 304H178.300z"/></svg><a href="#">Dr. Nick Hand</a></li>
        <li><svg style="width:40.8px" viewBox="0 0 512 512"><path d="M48 64C21.500 64 0 85.500 0 112c0 15.100 7.100 29.300 19.200 38.400L236.800 313.600c11.400 8.500 27 8.500 38.400 0L492.800 150.400c12.100-9.100 19.200-23.300 19.200-38.400c0-26.500-21.500-48-48-48H48zM0 176V384c0 35.300 28.700 64 64 64H448c35.300 0 64-28.700 64-64V176L294.400 339.200c-22.800 17.100-54 17.100-76.800 0L0 176z"/></svg><a href="#">nhand@design.upenn.edu</a></li>
        <li><svg style="width:40.8px" viewBox="0 0 512 512"><path d="M459.370 151.716c.325 4.548.325 9.097.325 13.645 0 138.720-105.583 298.558-298.558 298.558-59.452 0-114.680-17.219-161.137-47.106 8.447.974 16.568 1.299 25.340 1.299 49.055 0 94.213-16.568 130.274-44.832-46.132-.975-84.792-31.188-98.112-72.772 6.498.974 12.995 1.624 19.818 1.624 9.421 0 18.843-1.300 27.614-3.573-48.081-9.747-84.143-51.980-84.143-102.985v-1.299c13.969 7.797 30.214 12.670 47.431 13.319-28.264-18.843-46.781-51.005-46.781-87.391 0-19.492 5.197-37.360 14.294-52.954 51.655 63.675 129.300 105.258 216.365 109.807-1.624-7.797-2.599-15.918-2.599-24.040 0-57.828 46.782-104.934 104.934-104.934 30.213 0 57.502 12.670 76.670 33.137 23.715-4.548 46.456-13.320 66.599-25.340-7.798 24.366-24.366 44.833-46.132 57.827 21.117-2.273 41.584-8.122 60.426-16.243-14.292 20.791-32.161 39.308-52.628 54.253z"/></svg><a href="#">nicholashand</a></li>
      </ul>
    </div>
    <div>
      <h3>Course details</h3>
      <h4>Section 401</h4>
      <ul class="facts">
        <li><svg style="width:35.7px" viewBox="0 0 448 512"><path d="M96 32V64H48C21.500 64 0 85.500 0 112v48H448V112c0-26.500-21.500-48-48-48H352V32c0-17.700-14.300-32-32-32s-32 14.300-32 32V64H160V32c0-17.700-14.300-32-32-32S96 14.300 96 32zM448 192H0V464c0 26.500 21.500 48 48 48H400c26.500 0 48-21.500 48-48V192z"/></svg>Mondays and Wednesdays</li>
        <li><svg style="width:40.8px" viewBox="0 0 512 512"><path fill-rule="evenodd" d="M256 0a256 256 0 1 1 0 512A256 256 0 1 1 256 0zM232 120V256c0 8 4 15.500 10.700 20l96 64c11 7.400 25.900 4.400 33.300-6.700s4.400-25.900-6.700-33.300L280 243.200V120c0-13.300-10.700-24-24-24s-24 10.700-24 24z"/></svg>8:30AM-10:00AM</li>
        <li><svg style="width:30.6px" viewBox="0 0 384 512"><path fill-rule="evenodd" d="M215.700 499.200C267 435 384 279.400 384 192C384 86 298 0 192 0S0 86 0 192c0 87.400 117 243 168.300 307.200c12.300 15.300 35.100 15.300 47.400 0zM192 128a64 64 0 1 1 0 128 64 64 0 1 1 0-128z"/></svg>Williams Hall 202</li>
      </ul>
    </div>
    <div>
      <h3>Contacting us</h3>
      <p class="contact">E-mail is the best way to get in contact with us. We will try to respond to all course-related e-mails within 24 hours, although we <em>do</em> have a few tiny humans <svg class="baby" viewBox="0 0 36 36"><defs><radialGradient id="skin" cx=".5" cy=".4" r=".6"><stop offset="0" stop-color="#ffdf5e"/><stop offset=".7" stop-color="#fbc93a"/><stop offset="1" stop-color="#e9a52a"/></radialGradient></defs><circle cx="3.500" cy="20.500" r="3" fill="#efb035"/><circle cx="32.500" cy="20.500" r="3" fill="#efb035"/><ellipse cx="18" cy="19.500" rx="14.500" ry="15.500" fill="url(#skin)"/><path d="M15 3c2 3 6 3 7 .5M17 1.500c3-1 5 1 4.500 4" fill="none" stroke="#d99a25" stroke-width="1.500" stroke-linecap="round"/><ellipse cx="12" cy="20" rx="1.900" ry="2.500" fill="#4a2d12"/><ellipse cx="24" cy="20" rx="1.900" ry="2.500" fill="#4a2d12"/><path d="M9.500 15.500q2-1.500 4-.5M22.500 15q2-1 4 .5M16.500 25q1.500 1 3 0" fill="none" stroke="#d9912a" stroke-width="1"/><path d="M13.500 27.500q4.500 1 9 0q-1 4.500-4.500 4.500t-4.500-4.500z" fill="#5a2a12"/></svg> at home, so it may be a bit longer on occassion. Please be patient!</p>
    </div>
  </section>
</main>
</body>
</html>
```
FILE: styles.css
```
* { box-sizing: border-box; margin: 0; padding: 0; }
html, body { height: 1638px; overflow: hidden; }
body {
  font-family: "Fira Sans Condensed", "Open Sans Condensed", "Open Sans", sans-serif;
  font-size: 34px;
  line-height: 51px;
  color: #212529;
  background: #fff;
  -webkit-text-stroke: 0.5px;
}
svg { display: block; flex: none; }

.navbar {
  display: flex;
  align-items: center;
  height: 127px;
  padding: 0 43px 0 35px;
  background: #f9e795;
  color: #545030;
}
.navbar a { color: inherit; text-decoration: none; white-space: nowrap; }
.brand { font-size: 51px; line-height: 60px; margin-top: -5px; }
.menu {
  display: flex;
  gap: 40.8px;
  margin: -2px 0 0 auto;
  font-size: 40.8px;
  line-height: 60px;
}
.menu a { display: flex; align-items: center; }
.caret {
  width: 24px;
  border: 12px solid transparent;
  border-top-color: #7c774c;
  border-bottom: 0;
  margin-left: 20px;
}
.caret.solid { border-top-color: #545030; margin: -9px 33px 0 10px; }
.tools { display: flex; align-items: center; margin-left: 69.5px; }
.external { width: 41px; height: 41px; margin-top: -8px; }
.search { width: 44px; height: 44px; }

.page { width: 2270px; margin-left: 367px; }
.hero { display: flex; justify-content: space-between; height: 1087px; }
.intro { width: 1310px; padding-top: 6px; }
h1, h3, h4 { font-weight: 700; color: #38393d; }
h1 { font-size: 119px; line-height: 119px; white-space: nowrap; }
.subtitle { font-size: 57.8px; line-height: 86.7px; margin-top: 45px; }
.meta { font-size: 40.8px; line-height: 61.2px; margin-top: 69px; color: #6c757d; }
.map { width: 897px; height: 973px; }

hr { border: 0; height: 6px; background: #ebebf0; }
.columns {
  display: grid;
  grid-template-columns: repeat(3, 1fr);
  gap: 51px;
  padding-top: 40px;
}
h3 { font-size: 59.2px; line-height: 70px; }
h4 { font-size: 44.9px; line-height: 53px; margin-top: 51px; }
.facts { list-style: none; margin-top: 18px; font-size: 40.8px; line-height: 61.2px; }
.facts li { display: flex; align-items: center; gap: 29px; height: 61.2px; white-space: nowrap; }
.facts svg { height: 40.8px; margin-top: -3px; fill: #212529; }
.facts a { color: #00008b; }
.contact { margin-top: 18px; }
.baby { display: inline-block; width: 34px; height: 35px; vertical-align: -4px; }
```
